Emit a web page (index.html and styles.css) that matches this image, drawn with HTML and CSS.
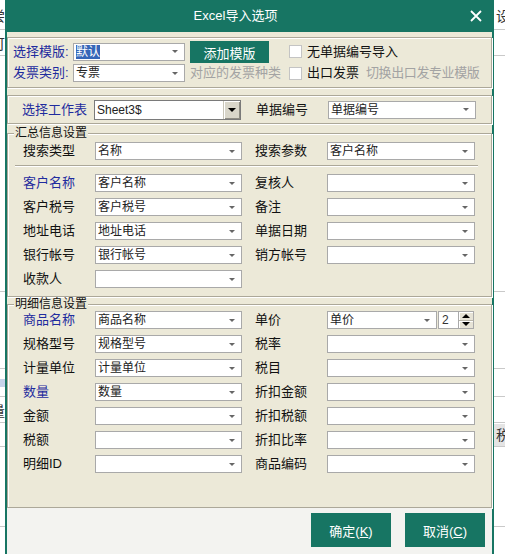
FILE: index.html
```html
<!DOCTYPE html>
<html lang="zh-CN">
<head>
  <meta charset="UTF-8">
  <meta name="viewport" content="width=device-width, initial-scale=1.0">
  <title>Excel导入选项</title>
  <link rel="stylesheet" href="styles.css">
</head>

<body>
  <!-- 主窗口（被对话框挡住，只露出两边） -->
  <div class="app">
    <div class="app-row row-top"><span class="cell-l">尝</span><span class="cell-r">设</span></div>
    <div class="app-row row-2"><span class="cell-l">可</span><span class="cell-r"></span></div>
    <div class="app-row row-3"><span class="cell-l"></span><span class="cell-r"></span></div>
    <div class="app-row row-4"><span class="cell-l"></span><span class="cell-r"></span></div>
    <div class="app-row row-5"><span class="cell-l sel"></span><span class="cell-r"></span></div>
    <div class="app-row row-6"><span class="cell-l">量</span><span class="cell-r"></span></div>
    <div class="app-row row-7"><span class="cell-l"></span><span class="cell-r tag">税</span></div>
    <div class="app-row row-8"><span class="cell-l"></span><span class="cell-r"></span></div>
  </div>

  <div class="dialog">
    <div class="titlebar">
      <span class="title">Excel导入选项</span>
      <span class="close">
        <svg width="12" height="12" viewBox="0 0 12 12">
          <path d="M1 1 L11 11 M11 1 L1 11" stroke="#fff" stroke-width="1.8" fill="none"/>
        </svg>
      </span>
    </div>

    <div class="dialog-body">
      <!-- 模版 / 发票类别 -->
      <div class="panel template-panel">
        <span class="lbl blue">选择模版:</span>
        <div class="combo"><span class="value"><span class="selected">默认</span></span><i class="arrow"></i></div>
        <button class="btn add-btn">添加模版</button>
        <label class="check"><span class="box"></span>无单据编号导入</label>

        <span class="lbl blue">发票类别:</span>
        <div class="combo"><span class="value">专票</span><i class="arrow"></i></div>
        <span class="hint">对应的发票种类</span>
        <label class="check"><span class="box"></span>出口发票<span class="hint tail">切换出口发专业模版</span></label>
      </div>

      <!-- 工作表 -->
      <div class="panel sheet-panel">
        <span class="lbl blue">选择工作表</span>
        <div class="combo sheet"><span class="value">Sheet3$</span><span class="drop-btn"><i></i></span></div>
        <span class="lbl r">单据编号</span>
        <div class="combo"><span class="value">单据编号</span><i class="arrow"></i></div>
      </div>

      <!-- 汇总信息 -->
      <section class="group">
        <h3 class="group-title">汇总信息设置</h3>
        <div class="fields summary">
          <span class="lbl">搜索类型</span>
          <div class="combo"><span class="value">名称</span><i class="arrow"></i></div>
          <span class="lbl r">搜索参数</span>
          <div class="combo"><span class="value">客户名称</span><i class="arrow"></i></div>

          <div class="sep"></div>

          <span class="lbl blue">客户名称</span>
          <div class="combo"><span class="value">客户名称</span><i class="arrow"></i></div>
          <span class="lbl r">复核人</span>
          <div class="combo"><span class="value"></span><i class="arrow"></i></div>

          <span class="lbl">客户税号</span>
          <div class="combo"><span class="value">客户税号</span><i class="arrow"></i></div>
          <span class="lbl r">备注</span>
          <div class="combo"><span class="value"></span><i class="arrow"></i></div>

          <span class="lbl">地址电话</span>
          <div class="combo"><span class="value">地址电话</span><i class="arrow"></i></div>
          <span class="lbl r">单据日期</span>
          <div class="combo"><span class="value"></span><i class="arrow"></i></div>

          <span class="lbl">银行帐号</span>
          <div class="combo"><span class="value">银行帐号</span><i class="arrow"></i></div>
          <span class="lbl r">销方帐号</span>
          <div class="combo"><span class="value"></span><i class="arrow"></i></div>

          <span class="lbl">收款人</span>
          <div class="combo"><span class="value"></span><i class="arrow"></i></div>
        </div>
      </section>

      <!-- 明细信息 -->
      <section class="group detail">
        <h3 class="group-title">明细信息设置</h3>
        <div class="fields">
          <span class="lbl blue">商品名称</span>
          <div class="combo"><span class="value">商品名称</span><i class="arrow"></i></div>
          <span class="lbl r">单价</span>
          <div class="price">
            <div class="combo"><span class="value">单价</span><i class="arrow"></i></div>
            <span class="digits">2</span>
            <span class="spin"><i class="up"></i><i class="down"></i></span>
          </div>

          <span class="lbl">规格型号</span>
          <div class="combo"><span class="value">规格型号</span><i class="arrow"></i></div>
          <span class="lbl r">税率</span>
          <div class="combo"><span class="value"></span><i class="arrow"></i></div>

          <span class="lbl">计量单位</span>
          <div class="combo"><span class="value">计量单位</span><i class="arrow"></i></div>
          <span class="lbl r">税目</span>
          <div class="combo"><span class="value"></span><i class="arrow"></i></div>

          <span class="lbl blue">数量</span>
          <div class="combo"><span class="value">数量</span><i class="arrow"></i></div>
          <span class="lbl r">折扣金额</span>
          <div class="combo"><span class="value"></span><i class="arrow"></i></div>

          <span class="lbl">金额</span>
          <div class="combo"><span class="value"></span><i class="arrow"></i></div>
          <span class="lbl r">折扣税额</span>
          <div class="combo"><span class="value"></span><i class="arrow"></i></div>

          <span class="lbl">税额</span>
          <div class="combo"><span class="value"></span><i class="arrow"></i></div>
          <span class="lbl r">折扣比率</span>
          <div class="combo"><span class="value"></span><i class="arrow"></i></div>

          <span class="lbl">明细ID</span>
          <div class="combo"><span class="value"></span><i class="arrow"></i></div>
          <span class="lbl r">商品编码</span>
          <div class="combo"><span class="value"></span><i class="arrow"></i></div>
        </div>
      </section>
    </div>

    <div class="footer">
      <button class="btn big">确定(<u>K</u>)</button>
      <button class="btn big">取消(<u>C</u>)</button>
    </div>
  </div>
</body>
</html>
```

FILE: styles.css
```css
:root {
  --teal: #177563;
  --face: #ece9d8;
  --edge: #aca899;
  --blue: #1f2c9e;
  --hint: #a3a3a3;
}

* {
  box-sizing: border-box;
}

body {
  margin: 0;
  width: 505px;
  height: 554px;
  overflow: hidden;
  position: relative;
  background: #fff;
  font-family: "Liberation Sans", "Noto Sans CJK SC", sans-serif;
  font-size: 13px;
  color: #111;
}

/* 后面的主窗口 */
.app {
  display: flex;
  flex-direction: column;
}

.app-row {
  display: flex;
  justify-content: space-between;
  align-items: center;
  border-bottom: 1px solid #c9c9c9;
  font-size: 14px;
  color: #333;
}

.cell-l {
  margin-left: -9px;
  width: 14px;
}

.cell-r {
  width: 11px;
  padding-left: 2px;
  overflow: hidden;
}

.row-top { height: 30px; }
.row-2 { height: 26px; }
.row-3 { height: 236px; }
.row-4 { height: 77px; }
.row-5 { height: 28px; }
.row-6 { height: 26px; }
.row-7 { height: 24px; }
.row-8 { height: 80px; }

.cell-l.sel {
  height: 8px;
  background: #c6d3ea;
}

.cell-r.tag {
  background: #e4e4e4;
  height: 22px;
}

/* 对话框 */
.dialog {
  position: absolute;
  left: 5px;
  top: 0;
  width: 489px;
  height: 554px;
  padding: 0 2px;
  background: var(--teal);
  display: flex;
  flex-direction: column;
}

.titlebar {
  height: 32px;
  flex: none;
  display: flex;
  align-items: center;
  color: #fff;
}

.title {
  flex: 1;
  text-align: center;
  font-size: 13px;
  line-height: 16px;
  padding-left: 2px;
}

.close {
  width: 30px;
  display: flex;
  justify-content: center;
  padding-right: 2px;
}

.dialog-body {
  flex: 1;
  background: var(--face);
  padding-top: 5px;
  display: flex;
  flex-direction: column;
}

.panel,
.group {
  border: 1px solid var(--edge);
  box-shadow: inset 1px 1px 0 #fff, 1px 1px 0 #fff;
}

.lbl {
  font-size: 13px;
  line-height: 16px;
  white-space: nowrap;
}

.lbl.blue {
  color: var(--blue);
}

.hint {
  color: var(--hint);
  font-size: 13px;
  line-height: 16px;
  white-space: nowrap;
}

.hint.tail {
  margin-left: 2px;
  letter-spacing: -0.4px;
}

/* 模版行 */
.template-panel {
  display: grid;
  grid-template-columns: 55px 112px 94px 1fr;
  grid-template-rows: 23px 20px;
  column-gap: 5px;
  align-items: center;
  padding: 2px 0 4px 5px;
}

.check {
  display: flex;
  align-items: center;
  gap: 5px;
  font-size: 13px;
  line-height: 16px;
  white-space: nowrap;
}

.box {
  width: 13px;
  height: 13px;
  background: #fff;
  border: 1px solid #c4c4c4;
}

.btn {
  border: none;
  background: var(--teal);
  color: #fff;
  font-family: inherit;
  font-size: 13px;
  padding: 0;
  cursor: pointer;
}

.add-btn {
  width: 79px;
  height: 22px;
  margin-top: 1px;
}

/* 下拉框 */
.combo {
  height: 18px;
  background: #fff;
  border: 1px solid #a9a9a9;
  display: flex;
  align-items: center;
  padding-left: 2px;
  font-size: 12px;
  line-height: 14px;
  color: #222;
  min-width: 0;
}

.combo .value {
  flex: 1;
  white-space: nowrap;
  overflow: hidden;
}

.selected {
  background: #3566b8;
  color: #fff;
}

.arrow {
  width: 0;
  height: 0;
  margin-right: 6px;
  border-left: 3px solid transparent;
  border-right: 3px solid transparent;
  border-top: 3px solid #666;
}

.combo.sheet {
  height: 20px;
  border-color: #7a7a7a;
  padding-right: 0;
}

.drop-btn {
  width: 17px;
  height: 18px;
  background: #d9d6ca;
  border-left: 1px solid #c8c5b8;
  box-shadow: inset 1px 1px 0 #fff, inset -1px -1px 0 #8f8d84;
  display: flex;
  align-items: center;
  justify-content: center;
}

.drop-btn i {
  border-left: 4px solid transparent;
  border-right: 4px solid transparent;
  border-top: 4px solid #000;
}

/* 工作表 */
.sheet-panel {
  margin-top: 7px;
  height: 29px;
  display: grid;
  grid-template-columns: 72px 147px 87px 148px;
  align-items: center;
  padding-left: 14px;
}

.sheet-panel .lbl.r {
  padding-left: 15px;
}

/* 分组框 */
.group {
  margin-top: 9px;
  padding: 0 0 5px 15px;
}

.group.detail {
  margin-top: 7px;
  flex: 1;
}

.group-title {
  width: max-content;
  margin: -7px 0 0 -9px;
  padding: 0 1px;
  background: var(--face);
  font-size: 12px;
  font-weight: normal;
  line-height: 12px;
  color: #111;
}

.fields {
  display: grid;
  grid-template-columns: 72px 147px 85px 148px;
  grid-auto-rows: 24px;
  align-items: center;
}

.fields.summary {
  grid-template-rows: 24px 8px;
}

.detail .fields {
  margin-top: -2px;
}

.fields .lbl.r {
  padding-left: 13px;
}

.sep {
  grid-column: 1 / -1;
  align-self: start;
  height: 8px;
  margin: 0 -3px 0 -8px;
  padding-top: 2px;
}

.sep::before {
  content: "";
  display: block;
  border-top: 1px solid var(--edge);
  border-bottom: 1px solid #fff;
}

/* 单价 + 小数位 */
.price {
  display: flex;
  align-items: center;
  height: 18px;
}

.price .combo {
  width: 110px;
  flex: none;
}

.digits {
  width: 20px;
  height: 18px;
  flex: none;
  margin-left: 1px;
  background: #fff;
  border: 1px solid #a9a9a9;
  border-right: none;
  font-size: 12px;
  line-height: 16px;
  padding-left: 3px;
  color: #333;
}

.spin {
  width: 16px;
  height: 18px;
  flex: none;
  display: flex;
  flex-direction: column;
  border: 1px solid #a9a9a9;
  background: #e6e3d6;
}

.spin i {
  flex: 1;
  display: flex;
  align-items: center;
  justify-content: center;
  box-shadow: inset 1px 1px 0 #fff;
}

.spin i + i {
  border-top: 1px solid #b8b5a8;
}

.spin .up::before,
.spin .down::before {
  content: "";
  border-left: 4px solid transparent;
  border-right: 4px solid transparent;
}

.spin .up::before {
  border-bottom: 4px solid #000;
}

.spin .down::before {
  border-top: 4px solid #000;
}

/* 底部按钮 */
.footer {
  height: 46px;
  flex: none;
  background: #f3f3f0;
  display: flex;
  justify-content: flex-end;
  gap: 14px;
  padding: 5px 7px 0 0;
}

.btn.big {
  width: 80px;
  height: 34px;
}
```
